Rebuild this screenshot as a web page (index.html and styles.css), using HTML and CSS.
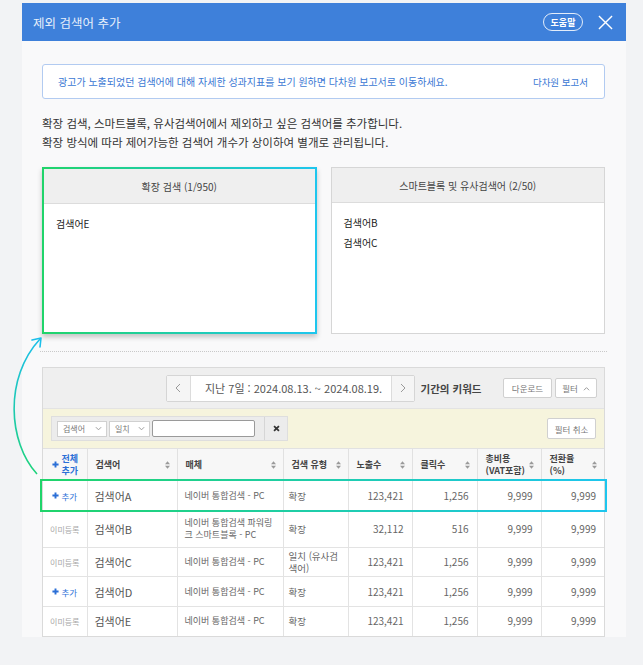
FILE: index.html
```html
<!DOCTYPE html>
<html lang="ko">
<head>
<meta charset="utf-8">
<title>제외 검색어 추가</title>
<link rel="stylesheet" href="styles.css">
</head>
<body>
<div class="modal">
  <header class="modal-head">
    <h1 class="title">제외 검색어 추가</h1>
    <div class="head-actions">
      <span class="help">도움말</span>
      <svg class="close" viewBox="0 0 16 16"><path d="M1 1L15 15M15 1L1 15"/></svg>
    </div>
  </header>
  <div class="modal-body">
    <div class="notice">
      <span>광고가 노출되었던 검색어에 대해 자세한 성과지표를 보기 원하면 다차원 보고서로 이동하세요.</span>
      <span class="notice-link">다차원 보고서</span>
    </div>
    <p class="desc">확장 검색, 스마트블록, 유사검색어에서 제외하고 싶은 검색어를 추가합니다.<br>확장 방식에 따라 제어가능한 검색어 개수가 상이하여 별개로 관리됩니다.</p>
    <div class="panels">
      <section class="panel panel-active">
        <div class="panel-head">확장 검색 (1/950)</div>
        <ul class="panel-list"><li>검색어E</li></ul>
      </section>
      <section class="panel">
        <div class="panel-head">스마트블록 및 유사검색어 (2/50)</div>
        <ul class="panel-list"><li>검색어B</li><li>검색어C</li></ul>
      </section>
    </div>
    <div class="divider"></div>
    <div class="card">
      <div class="toolbar">
        <div class="range">
          <div class="datenav">
            <span class="nav-btn nav-prev"><svg class="chev" viewBox="0 0 6 10"><path d="M5 1L1 5l4 4"/></svg></span>
            <span class="date">지난 7일 : 2024.08.13. ~ 2024.08.19.</span>
            <span class="nav-btn nav-next"><svg class="chev" viewBox="0 0 6 10"><path d="M1 1l4 4-4 4"/></svg></span>
          </div>
          <span class="range-label">기간의 키워드</span>
        </div>
        <div class="tools">
          <span class="btn btn-download">다운로드</span>
          <span class="btn btn-filter">필터 <svg class="chev-s" viewBox="0 0 8 5"><path d="M1 4.5L4 1.5 7 4.5"/></svg></span>
        </div>
      </div>
      <div class="filterbar">
        <div class="filter-box">
          <span class="select sel-kw">검색어 <svg class="chev-s" viewBox="0 0 8 5"><path d="M1 1l3 3 3-3"/></svg></span>
          <span class="select sel-match">일치 <svg class="chev-s" viewBox="0 0 8 5"><path d="M1 1l3 3 3-3"/></svg></span>
          <span class="input"></span>
          <span class="clear"><svg class="x-icon" viewBox="0 0 8 8"><path d="M1.2 1.2L6.8 6.8M6.8 1.2L1.2 6.8"/></svg></span>
        </div>
        <span class="btn btn-reset">필터 취소</span>
      </div>
      <div class="table-wrap">
        <table class="grid">
          <colgroup>
            <col class="w-add"><col class="w-kw"><col class="w-media"><col class="w-type"><col class="w-n1"><col class="w-n2"><col class="w-n3"><col class="w-n4">
          </colgroup>
          <thead>
            <tr>
              <th class="th-add"><span class="add-all"><svg class="plus" viewBox="0 0 8 8"><path d="M4 0.5V7.5M0.5 4H7.5"/></svg><span>전체<br>추가</span></span></th>
              <th><div class="th"><span>검색어</span><svg class="sort" viewBox="0 0 6 9"><path d="M3 0L6 3.5H0Z M3 9L0 5.5H6Z"/></svg></div></th>
              <th><div class="th"><span>매체</span><svg class="sort" viewBox="0 0 6 9"><path d="M3 0L6 3.5H0Z M3 9L0 5.5H6Z"/></svg></div></th>
              <th class="th-type"><div class="th"><span>검색 유형</span><svg class="sort" viewBox="0 0 6 9"><path d="M3 0L6 3.5H0Z M3 9L0 5.5H6Z"/></svg></div></th>
              <th><div class="th"><span>노출수</span><svg class="sort" viewBox="0 0 6 9"><path d="M3 0L6 3.5H0Z M3 9L0 5.5H6Z"/></svg></div></th>
              <th><div class="th"><span>클릭수</span><svg class="sort" viewBox="0 0 6 9"><path d="M3 0L6 3.5H0Z M3 9L0 5.5H6Z"/></svg></div></th>
              <th class="th-tight"><div class="th"><span>총비용<br>(VAT포함)</span><svg class="sort" viewBox="0 0 6 9"><path d="M3 0L6 3.5H0Z M3 9L0 5.5H6Z"/></svg></div></th>
              <th><div class="th"><span>전환율<br>(%)</span><svg class="sort" viewBox="0 0 6 9"><path d="M3 0L6 3.5H0Z M3 9L0 5.5H6Z"/></svg></div></th>
            </tr>
          </thead>
          <tbody>
            <tr class="r-a">
              <td class="c-add"><span class="add"><svg class="plus" viewBox="0 0 8 8"><path d="M4 0.5V7.5M0.5 4H7.5"/></svg>추가</span></td>
              <td class="kw">검색어A</td>
              <td class="media">네이버 통합검색 - PC</td>
              <td class="type">확장</td>
              <td class="num">123,421</td><td class="num">1,256</td><td class="num">9,999</td><td class="num">9,999</td>
            </tr>
            <tr class="r-b">
              <td class="c-add"><span class="done">이미등록</span></td>
              <td class="kw">검색어B</td>
              <td class="media">네이버 통합검색 파워링크 스마트블록 - PC</td>
              <td class="type">확장</td>
              <td class="num">32,112</td><td class="num">516</td><td class="num">9,999</td><td class="num">9,999</td>
            </tr>
            <tr class="r-c">
              <td class="c-add"><span class="done">이미등록</span></td>
              <td class="kw">검색어C</td>
              <td class="media">네이버 통합검색 - PC</td>
              <td class="type">일치 (유사검색어)</td>
              <td class="num">123,421</td><td class="num">1,256</td><td class="num">9,999</td><td class="num">9,999</td>
            </tr>
            <tr class="r-d">
              <td class="c-add"><span class="add"><svg class="plus" viewBox="0 0 8 8"><path d="M4 0.5V7.5M0.5 4H7.5"/></svg>추가</span></td>
              <td class="kw">검색어D</td>
              <td class="media">네이버 통합검색 - PC</td>
              <td class="type">확장</td>
              <td class="num">123,421</td><td class="num">1,256</td><td class="num">9,999</td><td class="num">9,999</td>
            </tr>
            <tr class="r-e">
              <td class="c-add"><span class="done">이미등록</span></td>
              <td class="kw">검색어E</td>
              <td class="media">네이버 통합검색 - PC</td>
              <td class="type">확장</td>
              <td class="num">123,421</td><td class="num">1,256</td><td class="num">9,999</td><td class="num">9,999</td>
            </tr>
          </tbody>
        </table>
        <div class="row-hl"></div>
      </div>
    </div>
  </div>
</div>
<svg class="flow-arrow" viewBox="0 0 643 665">
  <defs>
    <linearGradient id="arrowGrad" gradientUnits="userSpaceOnUse" x1="0" y1="338" x2="0" y2="475">
      <stop offset="0" stop-color="#1cbfea"/>
      <stop offset="1" stop-color="#1fd37a"/>
    </linearGradient>
  </defs>
  <path d="M37 474 C 8 442, 4 378, 40 339" fill="none" stroke="url(#arrowGrad)" stroke-width="1.6"/>
  <path d="M32 340 L41 338 L40 347" fill="none" stroke="#1cbfea" stroke-width="1.6" stroke-linecap="round" stroke-linejoin="round"/>
</svg>
</body>
</html>
```

FILE: styles.css
```css
* { box-sizing: border-box; }
html, body { margin: 0; padding: 0; }
body {
  background: #f2f3f5;
  font-family: "Noto Sans CJK KR", "Noto Sans", sans-serif;
  color: #333;
  height: 665px;
  overflow: hidden;
  position: relative;
}

.modal {
  margin: 3px 0 0 22px;
  width: 604px;
  background: #f9f9fa;
}

.modal-head {
  height: 38px;
  background: #3e80da;
  display: flex;
  align-items: center;
  justify-content: space-between;
  padding: 0 13px 0 11px;
}
.title {
  margin: 0;
  font-size: 12.5px;
  font-weight: 400;
  color: #e6effb;
}
.head-actions { display: flex; align-items: center; gap: 15px; }
.help {
  display: inline-flex;
  align-items: center;
  justify-content: center;
  width: 40px;
  height: 18px;
  border: 1.5px solid rgba(255,255,255,.85);
  border-radius: 9px;
  font-size: 9px;
  font-weight: 700;
  color: #fff;
}
.close { width: 15px; height: 15px; stroke: #fff; stroke-width: 1.5; fill: none; }

.modal-body { padding: 23px 21px 0 20px; }

.notice {
  height: 35px;
  background: #fff;
  border: 1px solid #b2cbf1;
  border-radius: 3px;
  display: flex;
  align-items: center;
  justify-content: space-between;
  padding: 0 16px 0 15px;
  font-size: 10px;
  color: #3b78d4;
}
.notice-link { font-size: 9.5px; }

.desc {
  margin: 15px 0 0;
  font-size: 11.5px;
  line-height: 19px;
  color: #333;
}

.panels {
  display: grid;
  grid-template-columns: 1fr 1fr;
  gap: 14px;
  margin-top: 15px;
}
.panel {
  height: 167px;
  background: #fff;
  border: 1px solid #d6d6d6;
  display: flex;
  flex-direction: column;
}
.panel-active {
  border: 2px solid;
  border-image: linear-gradient(90deg, #20d46a, #1ec6ee) 1;
  box-shadow: 0 3px 5px rgba(0,0,0,.22);
}
.panel-head {
  flex: none;
  height: 35px;
  background: #efefef;
  border-bottom: 1px solid #dcdcdc;
  display: flex;
  align-items: center;
  justify-content: center;
  font-size: 10px;
  color: #444;
}
.panel-list {
  margin: 0;
  padding: 10px 12px;
  list-style: none;
  font-size: 10px;
  line-height: 20px;
  color: #222;
}

.divider {
  margin: 17px -2px 0;
  border-top: 1px dotted #c9c9c9;
}

.card {
  margin-top: 15px;
  border: 1px solid #dadada;
  background: #fff;
}

.toolbar {
  height: 41px;
  background: #efefef;
  border-bottom: 1px solid #e3e3e3;
  display: grid;
  grid-template-columns: 1fr auto 1fr;
  align-items: center;
}
.range { grid-column: 2; display: flex; align-items: center; gap: 6px; }
.datenav {
  display: flex;
  height: 27px;
  background: #fff;
  border: 1px solid #d5d5d5;
  border-radius: 2px;
}
.nav-btn {
  width: 24px;
  background: #f5f5f5;
  display: flex;
  align-items: center;
  justify-content: center;
}
.nav-prev { border-right: 1px solid #dcdcdc; }
.nav-next { width: 23px; border-left: 1px solid #dcdcdc; }
.chev { width: 6px; height: 10px; fill: none; stroke: #9a9a9a; stroke-width: 1; }
.date {
  width: 200px;
  display: flex;
  align-items: center;
  justify-content: center;
  padding-left: 6px;
  font-size: 11px;
  color: #555;
}
.range-label { font-size: 10.5px; font-weight: 700; color: #444; }

.tools { grid-column: 3; justify-self: end; display: flex; gap: 3px; padding-right: 7px; }
.btn {
  height: 20px;
  background: #fff;
  border: 1px solid #d0d0d0;
  border-radius: 2px;
  display: inline-flex;
  align-items: center;
  justify-content: center;
  gap: 5px;
  font-size: 8.5px;
  color: #777;
}
.btn-download { width: 49px; }
.btn-filter { width: 42px; }
.chev-s { width: 7px; height: 5px; fill: none; stroke: #999; stroke-width: 1.1; }

.filterbar {
  height: 39px;
  background: #f6f4dd;
  display: flex;
  align-items: center;
  justify-content: space-between;
  padding: 0 8px;
}
.filter-box {
  width: 237px;
  height: 25px;
  background: #ececec;
  border: 1px solid #dedede;
  display: flex;
  align-items: center;
  padding-left: 5px;
}
.select {
  height: 16px;
  background: #fff;
  border: 1px solid #d0d0d0;
  display: inline-flex;
  align-items: center;
  justify-content: space-between;
  padding: 0 4px 0 5px;
  font-size: 8px;
  color: #777;
  margin-right: 2px;
}
.sel-kw { width: 50px; }
.sel-match { width: 41px; }
.input {
  width: 103px;
  height: 17px;
  background: #fff;
  border: 1px solid #9a9a9a;
  border-radius: 2px;
}
.clear {
  margin-left: auto;
  width: 23px;
  height: 100%;
  border-left: 1px solid #d6d6d6;
  display: flex;
  align-items: center;
  justify-content: center;
}
.x-icon { width: 7px; height: 7px; stroke: #333; stroke-width: 2; }
.btn-reset { width: 49px; height: 21px; }

.table-wrap { position: relative; }
.grid {
  width: 100%;
  border-collapse: collapse;
  table-layout: fixed;
}
.w-add { width: 44px; }
.w-kw { width: 90px; }
.w-media { width: 106px; }
.w-type { width: 65px; }
.w-n1 { width: 64px; }
.w-n2 { width: 65px; }
.w-n3 { width: 64px; }
.w-n4 { width: 63px; }

.grid th {
  height: 32px;
  background: #f7f7f7;
  border: 1px solid #e1e1e1;
  padding: 0 7px 0 8px;
  font-size: 9px;
  font-weight: 700;
  color: #444;
  text-align: left;
  line-height: 12px;
}
.grid th:first-child, .grid td:first-child { border-left: 0; }
.grid th:last-child, .grid td:last-child { border-right: 0; }
.grid tbody tr:last-child td { border-bottom: 0; }
.th { display: flex; align-items: center; justify-content: space-between; gap: 2px; }
.th-type { padding-left: 6px; }
.th-tight { padding-right: 4px; padding-left: 6px; }
.sort { flex: none; width: 5px; height: 8px; fill: #9a9a9a; }
.th-add { padding: 0; }
.add-all {
  display: flex;
  align-items: center;
  justify-content: center;
  gap: 2px;
  color: #2b6fd6;
}
.plus { width: 7px; height: 7px; stroke: #2b6fd6; stroke-width: 2.2; flex: none; }

.grid td {
  height: 30px;
  border: 1px solid #e3e3e3;
  padding: 0 8px;
  font-size: 10px;
  line-height: 12px;
  color: #666;
  background: #fff;
}
.grid .r-b td { height: 37px; }
.grid .r-c td { height: 29px; }
.grid .r-e td { height: 29px; }
.c-add { text-align: center; }
.grid td.c-add { padding: 0; }
.add {
  display: inline-flex;
  align-items: center;
  gap: 2px;
  font-size: 8.5px;
  color: #2f73d8;
}
.done { font-size: 8px; color: #a8a8a8; }
.grid td.kw { font-size: 11px; color: #555; padding-left: 7px; }
.grid td.media { font-size: 9px; padding: 0 2px 0 7px; }
.grid td.type { font-size: 9.5px; padding: 0 5px; }
.grid td.num { text-align: right; padding-right: 8px; }

.row-hl {
  position: absolute;
  top: 31px;
  left: -3px;
  right: -3px;
  height: 33px;
  border: 2px solid;
  border-image: linear-gradient(90deg, #20d46a, #1ec6ee) 1;
  pointer-events: none;
}

.flow-arrow {
  position: absolute;
  left: 0;
  top: 0;
  width: 643px;
  height: 665px;
  pointer-events: none;
}
```
